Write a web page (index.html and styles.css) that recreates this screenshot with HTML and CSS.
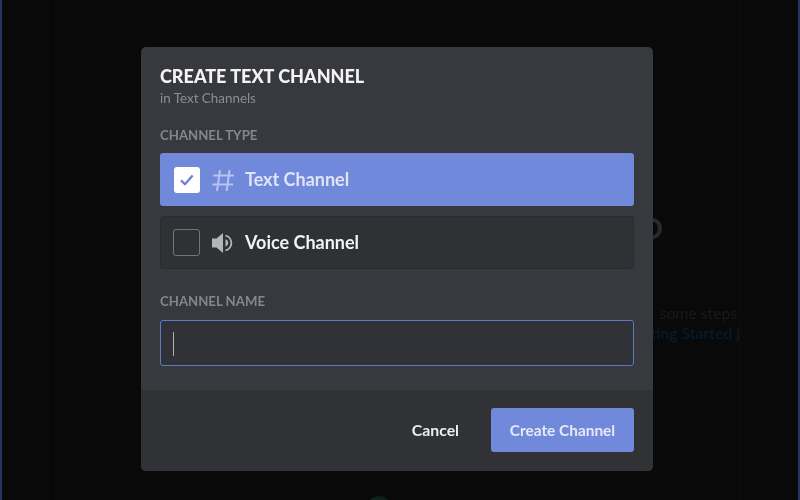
FILE: index.html
```html
<!DOCTYPE html>
<html lang="en">
<head>
<meta charset="utf-8">
<title>Create Text Channel</title>
<link rel="stylesheet" href="styles.css">
</head>
<body>
<div class="app">
  <div class="rail"></div>
  <div class="sidebar"></div>
  <main class="main">
    <div class="big-o">O</div>
    <p class="hint">some steps</p>
    <p class="hint link">ting Started <span class="hint-tail">j</span></p>
    <div class="avatar"></div>
  </main>
  <div class="members"></div>
  <div class="rail"></div>
</div>
<section class="modal">
  <div class="body">
    <h1 class="title">CREATE TEXT CHANNEL</h1>
    <div class="subtitle">in Text Channels</div>
    <div class="label label-type">CHANNEL TYPE</div>
    <div class="option option-on">
      <span class="check check-on">
        <svg width="16" height="16" viewBox="0 0 16 16"><path d="M2 8.4 6 12.2 13.6 3.6" fill="none" stroke="#6a7fd0" stroke-width="2.2"/></svg>
      </span>
      <svg class="opt-icon" width="24" height="24" viewBox="0 0 24 24"><path d="M9 2 6 23M18.6 2 15.6 23M2.4 7.6H23M1.4 16.4H22" fill="none" stroke="#b9c4ee" stroke-width="2"/></svg>
      <span class="opt-text">Text Channel</span>
    </div>
    <div class="option option-off">
      <span class="check"></span>
      <svg class="opt-icon" width="24" height="24" viewBox="0 0 24 24"><path d="M1 7.5H5.5L12 2V22L5.5 16.5H1Z" fill="#b3b5b8"/><path d="M14.5 8.2A4 4 0 0 1 14.5 15.8Z" fill="#b3b5b8"/><path d="M14.5 4.6A7.6 7.6 0 0 1 14.5 19.4" fill="none" stroke="#b3b5b8" stroke-width="1.8"/></svg>
      <span class="opt-text">Voice Channel</span>
    </div>
    <div class="label label-name">CHANNEL NAME</div>
    <div class="input"><span class="caret"></span></div>
  </div>
  <div class="footer">
    <button class="btn btn-cancel">Cancel</button>
    <button class="btn btn-create">Create Channel</button>
  </div>
</section>
</body>
</html>
```
FILE: styles.css
```css
* { box-sizing: border-box; }
html, body { margin: 0; height: 100%; overflow: hidden; background: #080808; }
body { font-family: Lato, "Open Sans", sans-serif; }

.app { display: flex; height: 500px; background: #090909; }
.rail { width: 2px; background: #233763; }
.sidebar { width: 50px; border-right: 1px solid #050505; }
.members { width: 58px; border-left: 1px solid #0c0d12; }
.main { flex: 1; display: flex; flex-direction: column; align-items: flex-end; overflow: hidden; position: relative; filter: blur(0.7px); }

.big-o { margin: 213px 0 0; font-size: 28px; line-height: 30px; font-weight: 900; color: #28292a; padding-right: 77px; }
.hint { margin: 0; font-size: 15.7px; line-height: 20px; color: #191a1c; white-space: nowrap; }
.hint:first-of-type { margin-top: 60px; padding-right: 3px; }
.link { color: #051a2b; font-weight: 700; }
.hint-tail { color: #191a1c; font-weight: 400; }
.avatar { position: absolute; left: 315px; top: 496px; width: 24px; height: 24px; border-radius: 50%; background: #10201a; }

.modal {
  position: absolute; left: 141px; top: 47px; width: 512px; height: 424px;
  display: flex; flex-direction: column; border-radius: 5px; overflow: hidden;
  background: #37393e; color: #fff; filter: blur(0.6px);
}
.body { flex: 1; padding: 19px 19px 0; }
.title { margin: 0; font-size: 18px; line-height: 20px; font-weight: 900; color: #f3f3f4; }
.subtitle { margin-top: 4px; font-size: 13.4px; line-height: 16px; color: #8c8e91; }
.label { font-size: 13.2px; line-height: 16px; font-weight: 700; color: #85878a; }
.label-type { margin-top: 21px; }
.label-name { margin-top: 24px; }
.option { display: flex; align-items: center; height: 53px; margin-top: 10px; padding-left: 13px; border-radius: 3px; }
.option-on { background: #7089db; }
.option-off { background: #2f3135; border: 1px solid #292b2f; padding-left: 12px; }
.check { display: flex; align-items: center; justify-content: center; width: 27px; height: 27px; border: 1px solid #727478; border-radius: 3px; }
.check-on { background: #fff; border: 0; width: 26px; height: 26px; margin-left: 1px; }
.opt-icon { margin-left: 11px; }
.opt-text { margin-left: 10px; margin-bottom: 2px; font-size: 18px; font-weight: 700; color: #f1f2f4; }
.option-on .opt-text { color: #dfe4f7; }
.input { height: 46px; margin-top: 11px; padding: 11px 12px; background: #303237; border: 1px solid #6079c4; border-radius: 3px; }
.caret { display: block; width: 1px; height: 24px; background: #aeb0b3; }
.footer { display: flex; align-items: center; justify-content: flex-end; gap: 32px; height: 81px; padding: 0 19px 2px 0; background: #303236; }
.btn { font-family: inherit; border: 0; padding: 0; font-weight: 700; color: #eceef2; }
.btn-cancel { background: none; font-size: 15.8px; }
.btn-create { width: 143px; height: 44px; border-radius: 3px; background: #7089db; color: #e6e9f8; font-size: 15.4px; }
```
